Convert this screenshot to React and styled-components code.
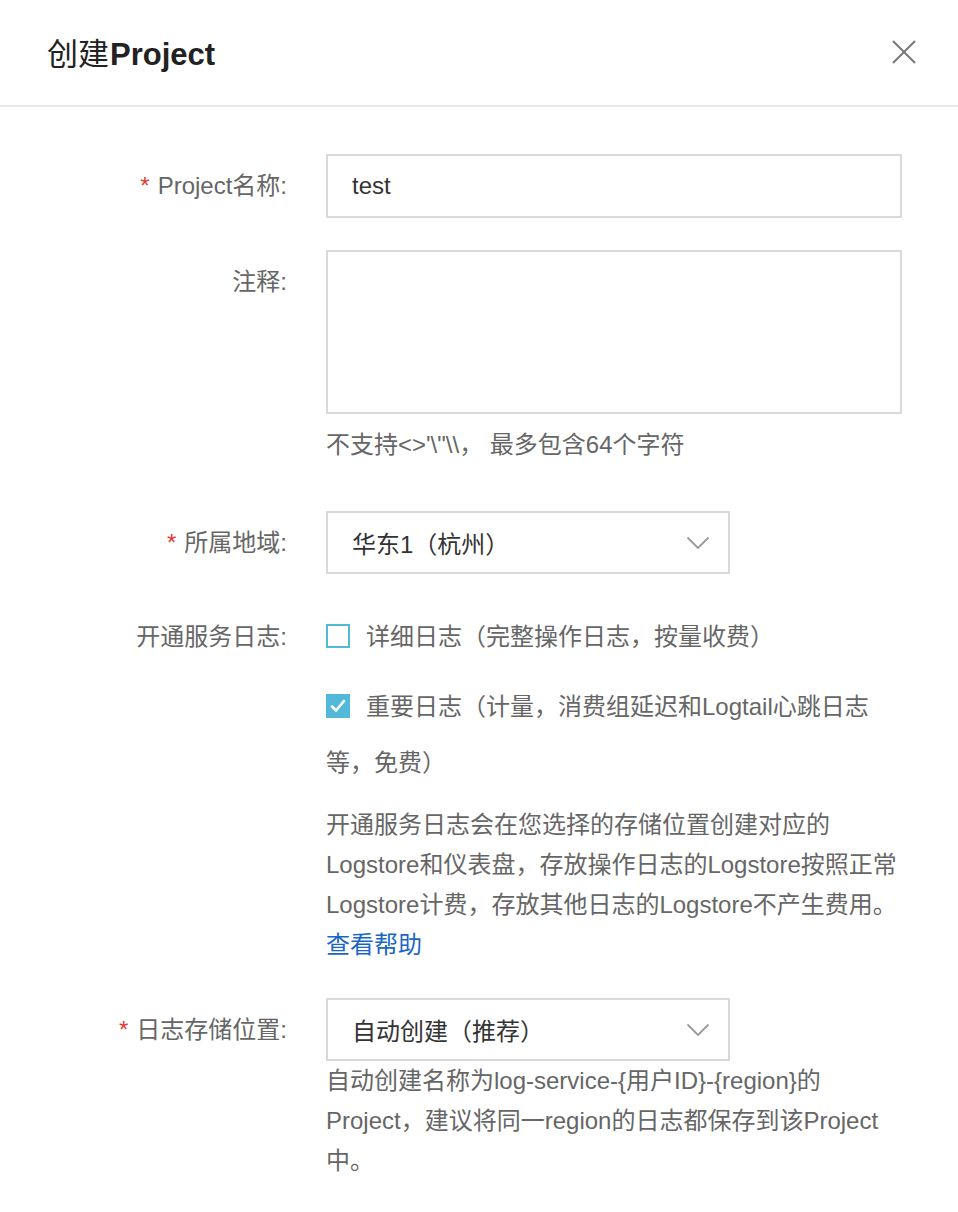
import React from "react";
import styled, { createGlobalStyle } from "styled-components";

const GlobalStyle = createGlobalStyle`
  html, body {
    margin: 0;
    padding: 0;
    background: #ffffff;
  }
  body {
    font-family: "Liberation Sans", "Noto Sans CJK SC", sans-serif;
    -webkit-font-smoothing: antialiased;
  }
  * { box-sizing: border-box; }
`;

const Dialog = styled.div`
  width: 958px;
  min-height: 1212px;
  background: #fff;
`;

const Header = styled.header`
  height: 107px;
  display: flex;
  align-items: center;
  justify-content: space-between;
  padding: 0 42px 2px 47px;
  border-bottom: 2px solid #e8e8e8;
`;

const Title = styled.h1`
  margin: 0;
  font-size: 31px;
  font-weight: 400;
  color: #222;
`;

const TitleStrong = styled.span`
  font-weight: 700;
  margin-left: 1px;
`;

const CloseButton = styled.button`
  width: 24px;
  height: 24px;
  padding: 0;
  border: none;
  background: none;
  display: flex;
  cursor: pointer;
`;

const Form = styled.form`
  padding-top: 47px;
`;

const Row = styled.div`
  display: grid;
  grid-template-columns: 287px 576px;
  column-gap: 39px;
  margin-bottom: ${(p) => p.$mb || 0}px;
`;

const Label = styled.label`
  text-align: right;
  font-size: 24px;
  line-height: ${(p) => p.$lh}px;
  color: #666;
  white-space: nowrap;
`;

const Star = styled.span`
  color: #e5392f;
  margin-right: 8px;
`;

const Control = styled.div`
  display: flex;
  flex-direction: column;
  align-items: flex-start;
`;

const TextInput = styled.input`
  width: 576px;
  height: 64px;
  border: 2px solid #d9d9d9;
  padding: 0 24px;
  font-family: inherit;
  font-size: 24px;
  color: #333;
  outline: none;
  background: #fff;
`;

const TextArea = styled.textarea`
  width: 576px;
  height: 164px;
  border: 2px solid #d9d9d9;
  padding: 16px 24px;
  font-family: inherit;
  font-size: 24px;
  color: #333;
  outline: none;
  resize: none;
  display: block;
`;

const Help = styled.div`
  margin-top: ${(p) => p.$mt || 0}px;
  font-size: 24px;
  line-height: 40px;
  color: #666;
  width: 576px;
`;

const Select = styled.div`
  width: 404px;
  height: 63px;
  border: 2px solid #d9d9d9;
  display: flex;
  align-items: center;
  justify-content: space-between;
  padding: 0 18px 0 24px;
  font-size: 24px;
  color: #333;
  background: #fff;
`;

const Option = styled.div`
  font-size: 24px;
  line-height: 56px;
  color: #666;
  margin-bottom: 14px;
  width: 576px;
`;

const Box = styled.span`
  display: inline-flex;
  align-items: center;
  justify-content: center;
  width: 24px;
  height: 24px;
  margin: 15px 16px 0 0;
  vertical-align: top;
  border: 2px solid #52b9d9;
  background: ${(p) => (p.$checked ? "#52b9d9" : "#fff")};
`;

const Desc = styled.div`
  font-size: 24px;
  line-height: 40px;
  color: #666;
  width: 576px;
`;

const Link = styled.a`
  color: #1a66c8;
  text-decoration: none;
`;

const Chevron = () => (
  <svg width="24" height="14" viewBox="0 0 24 14" fill="none">
    <polyline points="1.5,1.5 12,12 22.5,1.5" stroke="#999" strokeWidth="1.8" />
  </svg>
);

const Check = () => (
  <svg width="16" height="14" viewBox="0 0 16 14" fill="none">
    <polyline points="2,7.5 6,11.5 14,2" stroke="#fff" strokeWidth="2.6" strokeLinecap="round" strokeLinejoin="round" />
  </svg>
);

export default function App() {
  return (
    <Dialog>
      <GlobalStyle />
      <Header>
        <Title>
          创建<TitleStrong>Project</TitleStrong>
        </Title>
        <CloseButton aria-label="close">
          <svg width="24" height="24" viewBox="0 0 24 24">
            <line x1="1" y1="1" x2="23" y2="23" stroke="#777" strokeWidth="2" />
            <line x1="23" y1="1" x2="1" y2="23" stroke="#777" strokeWidth="2" />
          </svg>
        </CloseButton>
      </Header>
      <Form onSubmit={(e) => e.preventDefault()}>
        <Row $mb={32}>
          <Label $lh={64}>
            <Star>*</Star>Project名称:
          </Label>
          <Control>
            <TextInput defaultValue="test" />
          </Control>
        </Row>
        <Row $mb={46}>
          <Label $lh={64}>注释:</Label>
          <Control>
            <TextArea />
            <Help $mt={11}>{"不支持<>'\\\"\\\\， 最多包含64个字符"}</Help>
          </Control>
        </Row>
        <Row $mb={35}>
          <Label $lh={63}>
            <Star>*</Star>所属地域:
          </Label>
          <Control>
            <Select>
              <span>华东1（杭州）</span>
              <Chevron />
            </Select>
          </Control>
        </Row>
        <Row $mb={33}>
          <Label $lh={56}>开通服务日志:</Label>
          <Control>
            <Option>
              <Box />
              详细日志（完整操作日志，按量收费）
            </Option>
            <Option>
              <Box $checked>
                <Check />
              </Box>
              重要日志（计量，消费组延迟和Logtail心跳日志等，免费）
            </Option>
            <Desc>
              开通服务日志会在您选择的存储位置创建对应的Logstore和仪表盘，存放操作日志的Logstore按照正常Logstore计费，存放其他日志的Logstore不产生费用。
              <br />
              <Link href="#">查看帮助</Link>
            </Desc>
          </Control>
        </Row>
        <Row>
          <Label $lh={63}>
            <Star>*</Star>日志存储位置:
          </Label>
          <Control>
            <Select>
              <span>自动创建（推荐）</span>
              <Chevron />
            </Select>
            <Help>
              {"自动创建名称为log-service-{用户ID}-{region}的Project，建议将同一region的日志都保存到该Project中。"}
            </Help>
          </Control>
        </Row>
      </Form>
    </Dialog>
  );
}
